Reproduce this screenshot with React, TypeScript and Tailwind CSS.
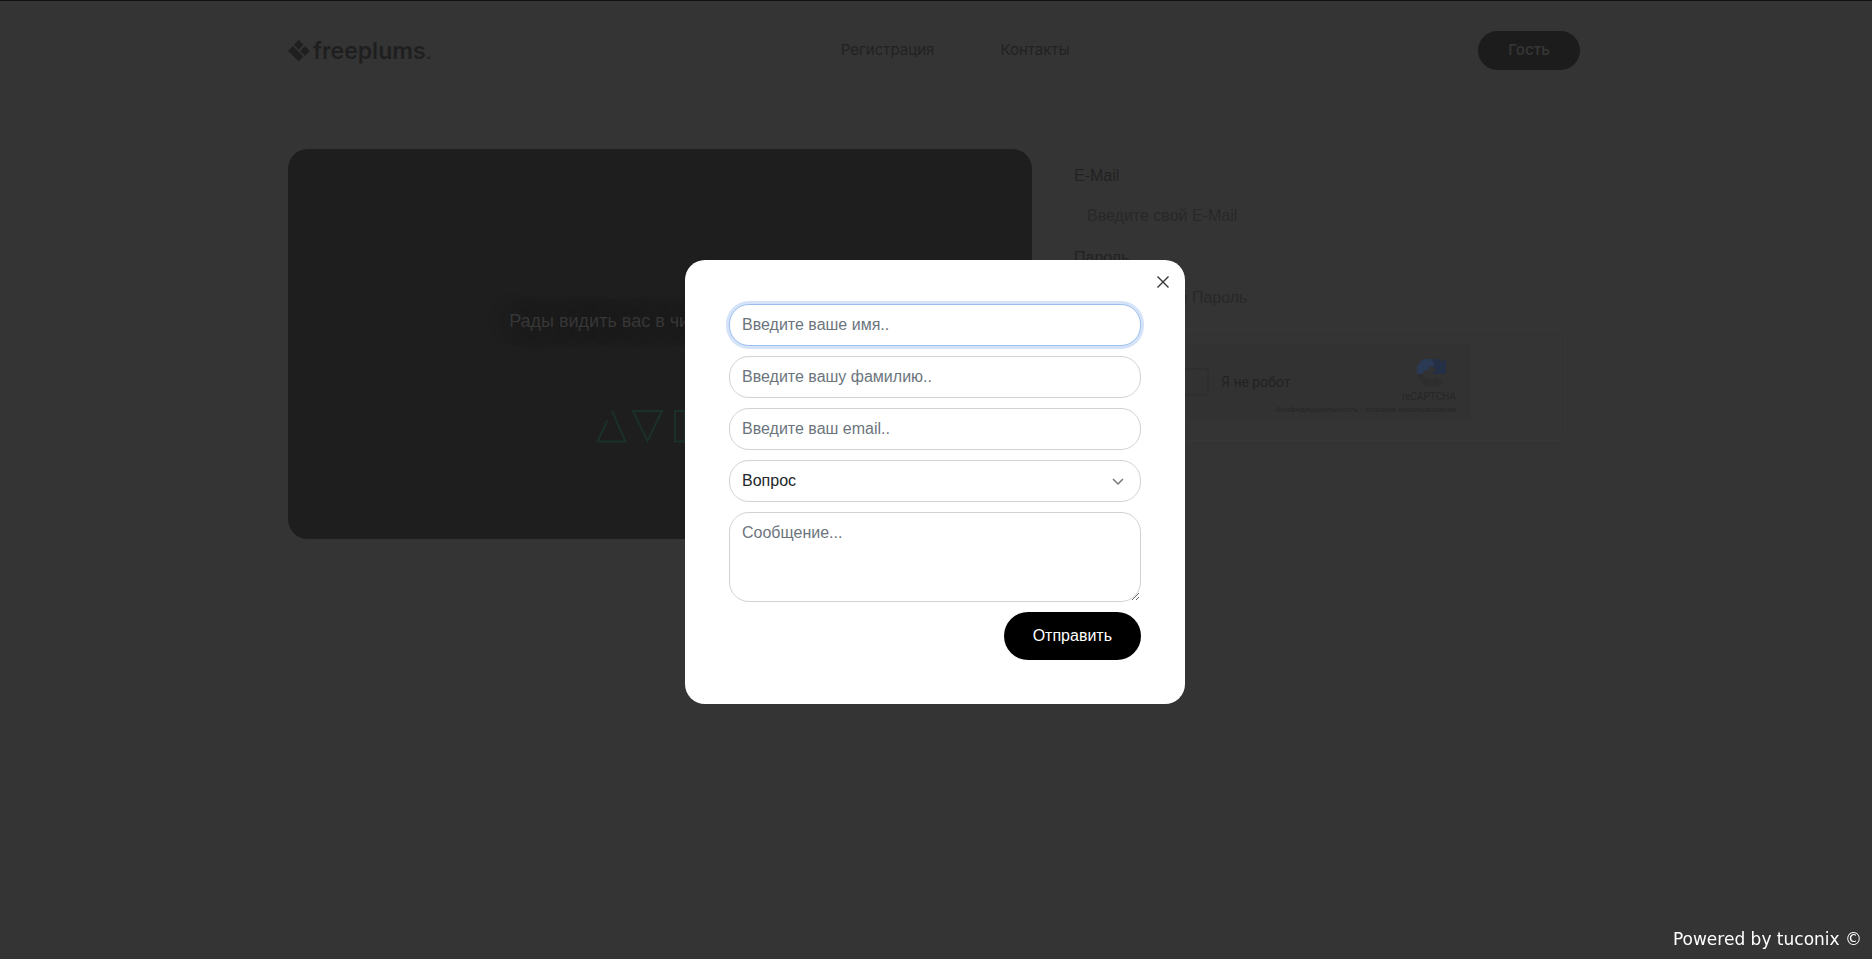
import { useState } from 'react'

const fieldBase =
  'block w-full rounded-[20px] border bg-white px-3 text-base leading-6 text-[#212529] outline-none placeholder:text-[#6c757d] placeholder:opacity-100'
const fieldIdle = 'border-[#d0d3d6]'
const fieldActive = 'border-[#9bbfee] shadow-[0_0_0_3px_#d5e3f9]'

function Logo() {
  return (
    <a href="#" className="flex items-center gap-[3px] text-[#1f1f1f]">
      <svg viewBox="0 0 22 22" className="h-[22px] w-[22px]" fill="currentColor">
        <path d="M10.700 0l4.700 4.700-4.700 4.700L6 4.700z" />
        <path d="M16.900 6.200l4.900 4.800-4.900 4.800-4.900-4.800z" />
        <path d="M4.900 5.900l10.600 10.500-4.900 5.200L0 11z" />
      </svg>
      <span className="font-['Inter',sans-serif] text-[23px] leading-7 font-semibold">
        freeplums<span className="font-light">.</span>
      </span>
    </a>
  )
}

function Header() {
  return (
    <header className="flex items-center justify-between pt-[30px] pr-1 font-['Inter','Roboto',sans-serif]">
      <Logo />
      <nav className="flex gap-[66px] pb-px text-[15px] leading-6 text-[#222]">
        <a href="#register">Регистрация</a>
        <a href="#contacts">Контакты</a>
      </nav>
      <button className="h-[39px] rounded-full bg-[#1c1c1c] px-[30px] text-[15px] font-semibold text-[#343434]">
        Гость
      </button>
    </header>
  )
}

function Hero() {
  return (
    <section className="flex h-[390px] w-[744px] flex-col items-center rounded-[20px] bg-[#1e1e1e] pt-[158px]">
      <h1 className="text-lg leading-7 text-[#363636] [text-shadow:0_0_20px_#181818]">
        Рады видить вас в числе партнеров
      </h1>
      <svg viewBox="0 0 128 34" className="mt-[74px] h-[34px] w-32" fill="none" stroke="#1b3029" strokeWidth="2">
        <path d="M11.500 11L1.500 32.500h28L16 2" />
        <path d="M37 2h29L51.500 32z" />
        <path d="M79 2h10v30.500H79z" />
        <path d="M97 2h29l-14.500 30z" />
      </svg>
    </section>
  )
}

function Captcha() {
  return (
    <div className="mt-[10px] flex h-28 items-start justify-center rounded-md border border-[#373737] pt-[13px]">
      <div className="flex h-[78px] w-[304px] justify-between border border-[#353535] bg-[#323232] px-3">
        <label className="flex items-center gap-3 font-['Roboto',sans-serif] text-sm text-[#222]">
          <input type="checkbox" className="h-7 w-7 appearance-none rounded-xs border-2 border-[#2e2e2e]" />
          <span className="whitespace-nowrap">Я не робот</span>
        </label>
        <div className="flex w-0 flex-col items-end pt-[13px] font-['Roboto',sans-serif] whitespace-nowrap text-[#262626]">
          <svg viewBox="0 0 32 32" className="mr-3 h-8 w-8 shrink-0">
            <path d="M8 2h15l4 3 4-3v15H17l4-4-5-5z" fill="#252f45" />
            <path d="M8 2h9l3 8-5-1-2 4-4 1-2 3H2V9z" fill="#2a3a54" />
            <path d="M2 17h6c1 5 6 7 11 5l3-2 6 5c-7 8-22 7-26-8z" fill="#2e2e2e" />
          </svg>
          <span className="mr-[3px] text-[10px] leading-4">reCAPTCHA</span>
          <span className="mr-[3px] text-[8px] leading-[10px]">
            <a href="#privacy">Конфиденциальность</a> - <a href="#terms">Условия использования</a>
          </span>
        </div>
      </div>
    </div>
  )
}

function LoginForm() {
  const input =
    'block h-[42px] w-full rounded-[20px] border border-[#363636] bg-transparent px-3 text-base outline-none placeholder:text-[#282828] placeholder:opacity-100'
  return (
    <form className="w-[492px] pt-[15px] text-base leading-6 text-[#222]">
      <label htmlFor="login-email" className="mb-[7px] block">
        E-Mail
      </label>
      <input id="login-email" type="email" placeholder="Введите свой E-Mail" className={input} />
      <label htmlFor="login-password" className="mt-[9px] mb-[7px] block">
        Пароль
      </label>
      <input id="login-password" type="password" placeholder="Введите свой Пароль" className={input} />
      <Captcha />
    </form>
  )
}

function ContactModal({ onClose }: { onClose: () => void }) {
  return (
    <div className="fixed inset-0 z-10 flex items-center justify-center pt-[5px] pr-[2px]">
      <div role="dialog" aria-modal="true" className="relative w-[500px] rounded-[20px] bg-white p-11">
        <button
          type="button"
          aria-label="Закрыть"
          onClick={onClose}
          className="absolute top-3 right-3 flex h-5 w-5 items-center justify-center text-[#333]"
        >
          <svg viewBox="0 0 12 12" className="h-3 w-3" fill="none" stroke="currentColor" strokeWidth="1.4">
            <path d="M0.500 0.500l11 11M11.500 0.500l-11 11" />
          </svg>
        </button>
        <form className="flex flex-col gap-[10px]" onSubmit={(e) => e.preventDefault()}>
          <input
            type="text"
            aria-label="Имя"
            placeholder="Введите ваше имя.."
            className={`${fieldBase} ${fieldActive} h-[42px]`}
          />
          <input
            type="text"
            aria-label="Фамилия"
            placeholder="Введите вашу фамилию.."
            className={`${fieldBase} ${fieldIdle} h-[42px]`}
          />
          <input
            type="email"
            aria-label="Email"
            placeholder="Введите ваш email.."
            className={`${fieldBase} ${fieldIdle} h-[42px]`}
          />
          <div className="relative">
            <select aria-label="Тема" className={`${fieldBase} ${fieldIdle} h-[42px] appearance-none`}>
              <option>Вопрос</option>
            </select>
            <svg
              viewBox="0 0 12 8"
              className="pointer-events-none absolute top-[18px] right-[17px] h-2 w-3"
              fill="none"
              stroke="#777"
              strokeWidth="1.5"
            >
              <path d="M1 1l5 5 5-5" />
            </svg>
          </div>
          <textarea
            aria-label="Сообщение"
            placeholder="Сообщение..."
            className={`${fieldBase} ${fieldIdle} h-[90px] resize-y py-2`}
          />
          <button type="submit" className="h-12 self-end rounded-full bg-black px-[29px] text-base text-white">
            Отправить
          </button>
        </form>
      </div>
    </div>
  )
}

export default function App() {
  const [open, setOpen] = useState(true)

  return (
    <div className="min-h-screen border-t border-[#111] bg-[#343434] font-['Liberation_Sans',Arial,sans-serif]">
      <div className="mx-auto max-w-[1320px] px-3">
        <Header />
        <main className="mt-[79px] flex gap-[42px]">
          <Hero />
          <LoginForm />
        </main>
      </div>
      {open && <ContactModal onClose={() => setOpen(false)} />}
      <footer className="fixed right-[10px] bottom-2 z-20 font-['DejaVu_Sans',Verdana,sans-serif] text-[17px] leading-6 text-white">
        Powered by tuconix ©
      </footer>
    </div>
  )
}
